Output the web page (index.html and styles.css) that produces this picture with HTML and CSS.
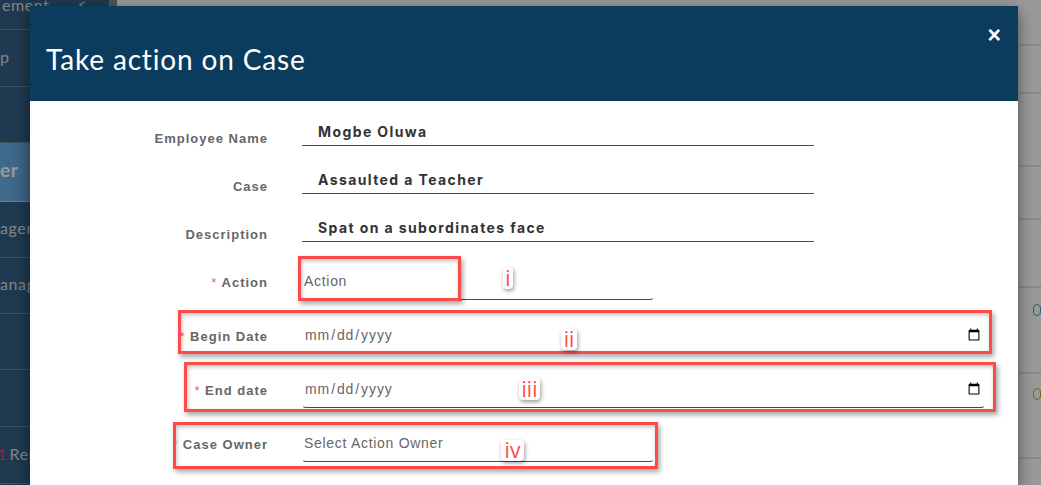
FILE: index.html
```html
<!DOCTYPE html>
<html lang="en">
<head>
<meta charset="utf-8">
<title>Take action on Case</title>
<link rel="stylesheet" href="styles.css">
</head>
<body>
<div class="page">
  <aside class="sidebar">
    <div class="menu">
      <div class="menu-item item-top"><span>ement</span><span class="chevron">&lt;</span></div>
      <div class="menu-item item-p"><span>p</span></div>
      <div class="menu-item item-blank"></div>
      <div class="menu-item item-active"><span>er</span></div>
      <div class="menu-item item-s"><span>agement</span></div>
      <div class="menu-item item-s"><span>anagement</span></div>
      <div class="menu-item item-s"></div>
      <div class="menu-item item-m"></div>
      <div class="menu-item item-m"><span><span class="num">1</span> Reports</span></div>
    </div>
    <div class="scrollbar"></div>
  </aside>
  <main class="content">
    <div class="row row-a"></div>
    <div class="row row-b"></div>
    <div class="row row-c"></div>
    <div class="row row-d"></div>
    <div class="row row-e"></div>
    <div class="row row-f"><span class="pill pill-teal"></span></div>
    <div class="row row-g"><span class="pill pill-gold"></span></div>
  </main>
</div>
<div class="backdrop"></div>
<section class="modal">
  <header class="modal-head">
    <h1 class="modal-title">Take action on Case</h1>
    <span class="modal-close">&times;</span>
  </header>
  <form class="modal-body">
    <div class="form-row static">
      <label class="form-label">Employee Name</label>
      <div class="static-value">Mogbe Oluwa</div>
    </div>
    <div class="form-row static">
      <label class="form-label">Case</label>
      <div class="static-value">Assaulted a Teacher</div>
    </div>
    <div class="form-row static">
      <label class="form-label">Description</label>
      <div class="static-value">Spat on a subordinates face</div>
    </div>
    <div class="form-row entry first-entry">
      <label class="form-label"><span class="req">*</span> Action</label>
      <input class="field field-short" type="text" placeholder="Action">
    </div>
    <div class="form-row entry">
      <label class="form-label"><span class="req">*</span> Begin Date</label>
      <input class="field field-wide" type="date">
    </div>
    <div class="form-row entry">
      <label class="form-label"><span class="req">*</span> End date</label>
      <input class="field field-wide" type="date">
    </div>
    <div class="form-row entry">
      <label class="form-label"><span class="req">*</span> Case Owner</label>
      <input class="field field-short" type="text" placeholder="Select Action Owner">
    </div>
  </form>
</section>
<div class="mark box-action"></div>
<div class="mark box-begin"></div>
<div class="mark box-end"></div>
<div class="mark box-owner"></div>
<span class="tag tag-i">i</span>
<span class="tag tag-ii">ii</span>
<span class="tag tag-iii">iii</span>
<span class="tag tag-iv">iv</span>
</body>
</html>
```

FILE: styles.css
```css
* { box-sizing: border-box; }
html, body { margin: 0; height: 485px; overflow: hidden; background: #fff; }
body { font-family: "Liberation Sans", Arial, sans-serif; position: relative; }

.page { display: flex; height: 485px; overflow: hidden; }
.sidebar { flex: 0 0 117px; display: flex; background: #335f85; overflow: hidden; }
.menu { flex: 1; min-width: 0; overflow: hidden; }
.scrollbar { flex: 0 0 8px; background: #8a8a8a; }
.menu-item {
  display: flex; align-items: center; justify-content: space-between;
  white-space: nowrap; overflow: hidden; padding-bottom: 4px;
  font-family: Lato, "Liberation Sans", sans-serif; font-size: 16px; letter-spacing: .6px;
  color: #d8dde2; border-bottom: 1px solid #6f8598;
}
.item-top { height: 30px; padding: 0 22px 21px 2px; }
.item-p { height: 57px; }
.item-blank { height: 56px; }
.item-active {
  height: 59px; padding-bottom: 6px; font-weight: 700; font-size: 19px;
  background: linear-gradient(90deg, #6cb2ea, #4f8dbf); color: #fff; border-bottom-color: #c7d3dc;
}
.item-s { height: 56px; }
.item-m { height: 57px; }
.num { color: #e04a5a; margin-left: -3px; margin-right: -2px; }
.chevron { font-size: 15px; }

.content { flex: 1; min-width: 0; background: #fff; overflow: hidden; }
.row { display: flex; align-items: flex-start; padding-left: 916px; border-bottom: 2px solid #e4e4e8; }
.row-a { height: 46px; }
.row-b { height: 48px; }
.row-c { height: 73px; }
.row-d { height: 53px; }
.row-e { height: 68px; }
.row-f { height: 86px; padding-top: 16px; }
.row-g { height: 85px; padding-top: 14px; }
.pill { display: block; width: 40px; height: 12px; border: 1.5px solid; border-radius: 6px; }
.pill-teal { border-color: #3fa9b8; }
.pill-gold { border-color: #cfa52f; }

.backdrop { position: absolute; inset: 0; background: rgba(0, 0, 0, .4); }

.modal {
  position: absolute; left: 30px; top: 6px; width: 988px; height: 479px;
  background: #fff; box-shadow: 0 5px 15px rgba(0, 0, 0, .5); border-radius: 2px 2px 0 0;
}
.modal-head {
  height: 95px; background: #0b3c5d; color: #fff;
  display: flex; justify-content: space-between; align-items: flex-start;
  padding: 0 17px 0 16px;
}
.modal-title {
  margin: 36px 0 0; font-family: Lato, sans-serif; font-weight: 400; font-size: 28px;
  line-height: 34px; letter-spacing: .85px;
}
.modal-close { margin-top: 17px; font-size: 23px; font-weight: 700; line-height: 24px; }

.modal-body { padding-top: 15px; }
.form-row { display: grid; grid-template-columns: 238px auto; column-gap: 34px; justify-content: start; }
.form-label {
  text-align: right; font-size: 13px; font-weight: 700; letter-spacing: 1px;
  color: #666; white-space: nowrap;
}
.req { color: #f0606e; font-weight: 400; }

.static { height: 48px; padding-top: 16px; }
.static .form-label { line-height: 14px; }
.static-value {
  width: 512px; height: 27px; margin-top: -13px; padding: 3px 16px 0;
  font-family: Inter, sans-serif; font-size: 14px; font-weight: 700; letter-spacing: 1.4px; color: #333;
  border-bottom: 1px solid #1c6e16; line-height: 20px;
}

.entry { height: 54px; align-items: center; }
.entry .form-label { padding-top: 2px; }
.first-entry { margin-top: -6px; }
.field {
  height: 38px; padding: 0 1px; font-family: "Liberation Sans", sans-serif; font-size: 14px;
  letter-spacing: .7px; color: #666;
  background: transparent; border: 1px solid transparent; border-bottom-color: #1c6e16;
  border-radius: 4px; outline: none;
}
.field::placeholder { color: #666; opacity: 1; }
.field-short { width: 352px; }
.field-wide { width: 683px; letter-spacing: .9px; }

.mark { position: absolute; border: 3px solid #fd4a4a; box-shadow: 2px 3px 5px rgba(0, 0, 0, .35), inset 1px 2px 4px rgba(0, 0, 0, .25); }
.box-action { left: 298px; top: 256px; width: 163px; height: 45px; }
.box-begin { left: 178px; top: 310px; width: 814px; height: 44px; }
.box-end { left: 184px; top: 362px; width: 812px; height: 50px; }
.box-owner { left: 173px; top: 422px; width: 485px; height: 47px; }

.tag {
  position: absolute; display: flex; align-items: center; justify-content: center;
  background: #fff; color: #fd4a4a; border-radius: 4px; font-family: "Open Sans", sans-serif;
  font-size: 21px; line-height: 1; box-shadow: 1px 2px 4px rgba(0, 0, 0, .4);
}
.tag-i { left: 503px; top: 267px; width: 10px; height: 22px; }
.tag-ii { left: 561px; top: 329px; width: 16px; height: 21px; }
.tag-iii { left: 519px; top: 378px; width: 21px; height: 22px; }
.tag-iv { left: 501px; top: 440px; width: 23px; height: 21px; }
```
